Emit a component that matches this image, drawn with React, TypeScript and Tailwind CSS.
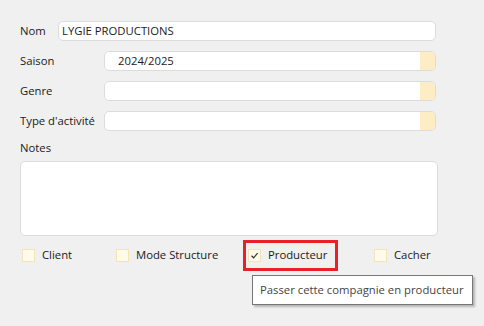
import React from 'react';

const Field: React.FC<{ label: string; value?: string; offset: string; combo?: boolean }> = ({ label, value, offset, combo }) => (
  <div className="flex items-center h-5">
    <span className={`${offset} shrink-0 text-[11.3px] text-[#1a1a1a]`}>{label}</span>
    <div className="flex-1 h-5 flex bg-white border border-[#dcdcdc] rounded-[5px] overflow-hidden">
      <span className={`flex-1 text-[11.3px] leading-[18px] text-[#1a1a1a] ${combo ? 'pl-[13px]' : 'pl-[3px]'}`}>{value}</span>
      {combo && <span className="w-[15px] h-full bg-[#fdedc4]" />}
    </div>
  </div>
);

const Check: React.FC<{ label: string; checked?: boolean }> = ({ label, checked }) => (
  <div className="flex items-center gap-[7px]">
    <span className="w-[13px] h-[13px] flex items-center justify-center bg-[#fffaea] border border-[#f2e3b9]">
      {checked && (
        <svg width="9" height="9" viewBox="0 0 9 9">
          <path d="M1.5 4.8 L3.6 6.8 L7.6 2.2" fill="none" stroke="#333" strokeWidth="1.2" />
        </svg>
      )}
    </span>
    <span className="text-[11.3px] text-[#1a1a1a]">{label}</span>
  </div>
);

const App: React.FC = () => {
  return (
    <div className="w-[484px] h-[326px] bg-[#f0f0f0] overflow-hidden" style={{ fontFamily: '"Open Sans", "Noto Sans", sans-serif' }}>
      <div className="pl-5 pr-[48px] pt-[21px] flex flex-col gap-[10px]">
        <Field label="Nom" value="LYGIE PRODUCTIONS" offset="w-[38px]" />
        <Field label="Saison" value="2024/2025" offset="w-[84px]" combo />
        <Field label="Genre" offset="w-[84px]" combo />
        <Field label="Type d'activité" offset="w-[84px]" combo />
      </div>
      <div className="pl-5 pr-[46px] mt-[9px]">
        <div className="text-[11.3px] text-[#1a1a1a] leading-[16px]">Notes</div>
        <div className="mt-[5px] h-[75px] bg-white border border-[#dcdcdc] rounded-[5px]" />
      </div>
      <div className="relative flex items-center h-[31px] mt-[4px] pl-[22px]">
        <div className="w-[94px]"><Check label="Client" /></div>
        <div className="w-[132px]"><Check label="Mode Structure" /></div>
        <div className="w-[95px] h-[31px] -ml-[5px] pl-[2px] flex items-center border-[3px] border-[#e8202a]">
          <Check label="Producteur" checked />
        </div>
        <div className="ml-[36px]"><Check label="Cacher" /></div>
        <div className="absolute left-[252px] top-[35px] w-[221px] h-[30px] flex items-center pl-[7px] bg-white border border-[#777] shadow-[2px_2px_2px_rgba(0,0,0,0.25)]">
          <span className="text-[11.3px] text-[#444] whitespace-nowrap">Passer cette compagnie en producteur</span>
        </div>
      </div>
    </div>
  );
};

export default App;
